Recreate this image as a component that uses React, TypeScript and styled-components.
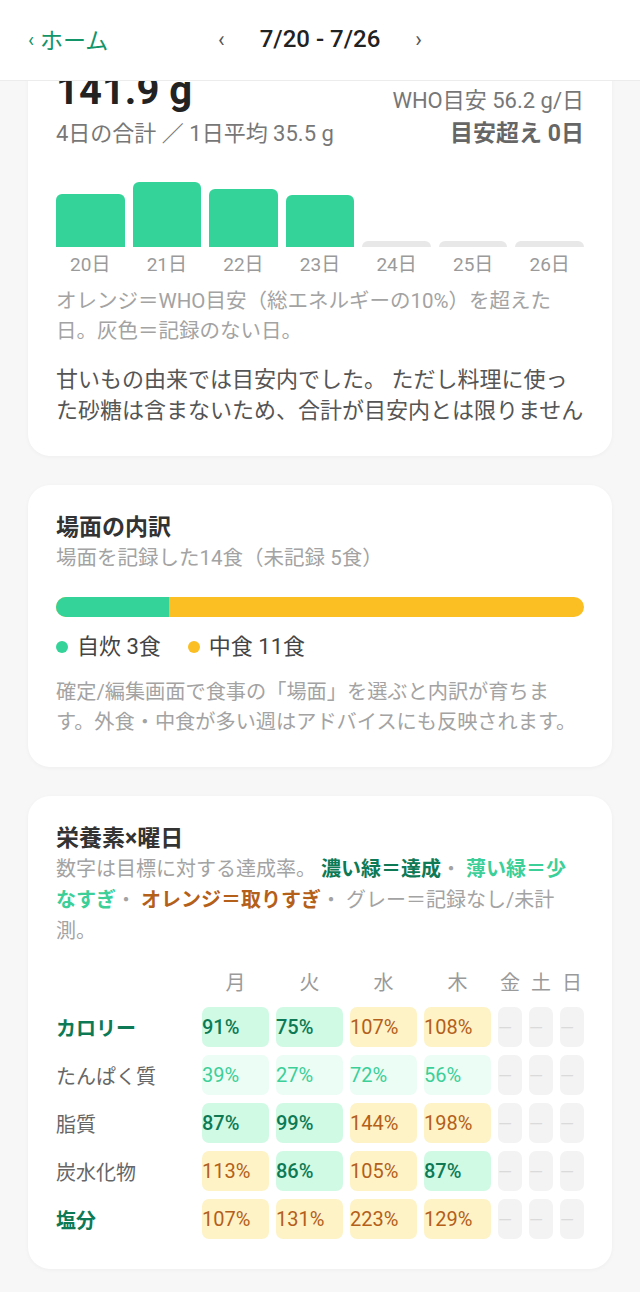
import React from 'react';
import styled, { createGlobalStyle, css } from 'styled-components';

const colors = {
  bg: '#f7f7f7',
  text: '#333333',
  body: '#555555',
  sub: '#a3a3a3',
  muted: '#777777',
  brand: '#139469',
  deep: '#0d7a55',
  mint: '#34d399',
  amber: '#fbbf24',
  orange: '#b45f1a',
};

const GlobalStyle = createGlobalStyle`
  html, body {
    margin: 0;
    padding: 0;
    background: ${colors.bg};
    font-family: Roboto, "Noto Sans CJK JP", sans-serif;
    color: ${colors.text};
  }
  * { box-sizing: border-box; }
`;

const Header = styled.header`
  position: fixed;
  top: 0;
  left: 0;
  right: 0;
  z-index: 10;
  height: 81px;
  background: #fff;
  border-bottom: 1px solid #ececec;
  display: grid;
  grid-template-columns: 1fr auto 1fr;
  align-items: center;
  padding: 0 28px;
`;

const BackLink = styled.a`
  display: flex;
  align-items: center;
  gap: 6px;
  color: ${colors.brand};
  font-size: 23px;
  text-decoration: none;
  margin-top: -3px;

  span:first-child {
    font-size: 20px;
    margin-top: 2px;
  }
`;

const WeekNav = styled.div`
  display: flex;
  align-items: center;
  gap: 35px;
  font-size: 24px;
  font-weight: 500;
  color: #222;
  margin-top: -2px;

  button {
    border: none;
    background: none;
    padding: 0;
    font-size: 22px;
    color: #555;
    font-family: inherit;
  }
`;

const Main = styled.main`
  display: flex;
  flex-direction: column;
  gap: 29px;
  padding: 41px 28px 24px;
`;

const Card = styled.section`
  background: #fff;
  border-radius: 22px;
  box-shadow: 0 1px 4px rgba(0, 0, 0, 0.04);
  padding: 28px 28px 30px;
`;

const SummaryRow = styled.div`
  display: flex;
  justify-content: space-between;
  align-items: flex-end;
`;

const Stack = styled.div<{ $end?: boolean }>`
  display: flex;
  flex-direction: column;
  gap: ${({ $end }) => ($end ? 3 : 6)}px;
  align-items: ${({ $end }) => ($end ? 'flex-end' : 'flex-start')};
`;

const BigNumber = styled.div`
  font-size: 40px;
  font-weight: 700;
  line-height: 44px;
  color: #222;
`;

const Meta = styled.div<{ $strong?: boolean }>`
  font-size: 22px;
  line-height: 30px;
  color: ${colors.muted};
  ${({ $strong }) =>
    $strong &&
    css`
      font-size: 23px;
      font-weight: 700;
      color: #666;
    `}
`;

const Chart = styled.div`
  margin-top: 18px;
  display: grid;
  grid-template-columns: repeat(7, 1fr);
  column-gap: 8px;
`;

const BarSlot = styled.div`
  height: 80px;
  display: flex;
  align-items: flex-end;
`;

const Bar = styled.div<{ $empty?: boolean }>`
  width: 100%;
  border-radius: 6px 6px 0 0;
  background: ${({ $empty }) => ($empty ? '#e8e8e8' : colors.mint)};
`;

const DayLabel = styled.div`
  margin-top: 6px;
  text-align: center;
  font-size: 19px;
  line-height: 24px;
  color: #9a9a9a;
`;

const Note = styled.p<{ $gap?: number; $size?: number }>`
  margin: ${({ $gap }) => $gap ?? 9}px 0 0;
  font-size: ${({ $size }) => $size ?? 20.5}px;
  line-height: 30px;
  color: ${colors.sub};
`;

const Body = styled.p`
  margin: 18px 0 0;
  font-size: 22px;
  line-height: 31px;
  color: ${colors.body};
  display: -webkit-box;
  -webkit-line-clamp: 2;
  -webkit-box-orient: vertical;
  overflow: hidden;
`;

const Title = styled.h2`
  margin: 0;
  font-size: 23px;
  line-height: 30px;
  font-weight: 700;
  color: #333;
`;

const Subtitle = styled.div`
  font-size: 20.5px;
  line-height: 30px;
  color: ${colors.sub};
`;

const SplitBar = styled.div`
  margin-top: 24px;
  height: 20px;
  border-radius: 10px;
  overflow: hidden;
  display: flex;
  background: ${colors.amber};
`;

const Legend = styled.div`
  margin-top: 15px;
  display: flex;
  gap: 27px;
  font-size: 22px;
  line-height: 30px;
  color: #444;
`;

const LegendItem = styled.div<{ $color: string }>`
  display: flex;
  align-items: center;
  gap: 9px;

  &::before {
    content: '';
    width: 12px;
    height: 12px;
    border-radius: 50%;
    background: ${({ $color }) => $color};
  }
`;

const KeyText = styled.p`
  margin: 0;
  font-size: 20px;
  line-height: 31px;
  color: ${colors.sub};
`;

const Key = styled.span<{ $tone: 'deep' | 'light' | 'over' }>`
  font-weight: 700;
  color: ${({ $tone }) => ($tone === 'deep' ? colors.deep : $tone === 'light' ? '#3ccf98' : colors.orange)};
`;

const Grid = styled.div`
  margin-top: 23px;
  display: grid;
  grid-template-columns: 1fr repeat(4, 67px) repeat(3, 24px);
  column-gap: 7px;
  row-gap: 8px;
  align-items: center;
`;

const HeadCell = styled.div`
  text-align: center;
  font-size: 20px;
  line-height: 26px;
  color: #9a9a9a;
  margin-bottom: 3px;
`;

const RowLabel = styled.div<{ $key?: boolean }>`
  font-size: 20px;
  color: ${({ $key }) => ($key ? colors.deep : '#666')};
  font-weight: ${({ $key }) => ($key ? 700 : 400)};
`;

type Tone = 'ok' | 'low' | 'over' | 'none';

const toneStyle: Record<Tone, { bg: string; fg: string; weight: number }> = {
  ok: { bg: '#d1fae5', fg: colors.deep, weight: 500 },
  low: { bg: '#ecfdf5', fg: '#3ccf98', weight: 400 },
  over: { bg: '#fef3c7', fg: colors.orange, weight: 400 },
  none: { bg: '#f3f3f3', fg: '#dadada', weight: 400 },
};

const Cell = styled.div<{ $tone: Tone }>`
  height: 40px;
  border-radius: 7px;
  display: flex;
  align-items: center;
  overflow: hidden;
  font-size: ${({ $tone }) => ($tone === 'none' ? '18px' : '20px')};
  background: ${({ $tone }) => toneStyle[$tone].bg};
  color: ${({ $tone }) => toneStyle[$tone].fg};
  font-weight: ${({ $tone }) => toneStyle[$tone].weight};
`;

const bars = [
  { day: '20日', h: 53 },
  { day: '21日', h: 65 },
  { day: '22日', h: 58 },
  { day: '23日', h: 52 },
  { day: '24日', h: 0 },
  { day: '25日', h: 0 },
  { day: '26日', h: 0 },
];

const weekdays = ['月', '火', '水', '木', '金', '土', '日'];

const nutrients: { name: string; key?: boolean; values: [number, Tone][] }[] = [
  { name: 'カロリー', key: true, values: [[91, 'ok'], [75, 'ok'], [107, 'over'], [108, 'over']] },
  { name: 'たんぱく質', values: [[39, 'low'], [27, 'low'], [72, 'low'], [56, 'low']] },
  { name: '脂質', values: [[87, 'ok'], [99, 'ok'], [144, 'over'], [198, 'over']] },
  { name: '炭水化物', values: [[113, 'over'], [86, 'ok'], [105, 'over'], [87, 'ok']] },
  { name: '塩分', key: true, values: [[107, 'over'], [131, 'over'], [223, 'over'], [129, 'over']] },
];

const HOME_MEALS = 3;
const TOTAL_MEALS = 14;

const App = () => {
  return (
    <>
      <GlobalStyle />
      <Header>
        <BackLink href="#">
          <span>‹</span>
          <span>ホーム</span>
        </BackLink>
        <WeekNav>
          <button>‹</button>
          <span>7/20 - 7/26</span>
          <button>›</button>
        </WeekNav>
        <div />
      </Header>

      <Main>
        <Card>
          <SummaryRow>
            <Stack>
              <BigNumber>141.9 g</BigNumber>
              <Meta>4日の合計 ／ 1日平均 35.5 g</Meta>
            </Stack>
            <Stack $end>
              <Meta>WHO目安 56.2 g/日</Meta>
              <Meta $strong>目安超え 0日</Meta>
            </Stack>
          </SummaryRow>
          <Chart>
            {bars.map((b) => (
              <BarSlot key={b.day}>
                <Bar $empty={!b.h} style={{ height: b.h || 6 }} />
              </BarSlot>
            ))}
            {bars.map((b) => (
              <DayLabel key={b.day}>{b.day}</DayLabel>
            ))}
          </Chart>
          <Note>オレンジ＝WHO目安（総エネルギーの10%）を超えた日。灰色＝記録のない日。</Note>
          <Body>甘いもの由来では目安内でした。 ただし料理に使った砂糖は含まないため、合計が目安内とは限りません</Body>
        </Card>

        <Card>
          <Title>場面の内訳</Title>
          <Subtitle>場面を記録した14食（未記録 5食）</Subtitle>
          <SplitBar>
            <div style={{ width: `${(HOME_MEALS / TOTAL_MEALS) * 100}%`, background: colors.mint }} />
          </SplitBar>
          <Legend>
            <LegendItem $color={colors.mint}>自炊 3食</LegendItem>
            <LegendItem $color={colors.amber}>中食 11食</LegendItem>
          </Legend>
          <Note $gap={15} $size={20.2}>
            確定/編集画面で食事の「場面」を選ぶと内訳が育ちます。外食・中食が多い週はアドバイスにも反映されます。
          </Note>
        </Card>

        <Card>
          <Title>栄養素×曜日</Title>
          <KeyText>
            数字は目標に対する達成率。 <Key $tone="deep">濃い緑＝達成</Key>・ <Key $tone="light">薄い緑＝少なすぎ</Key>・{' '}
            <Key $tone="over">オレンジ＝取りすぎ</Key>・ グレー＝記録なし/未計測。
          </KeyText>
          <Grid>
            <div />
            {weekdays.map((d) => (
              <HeadCell key={d}>{d}</HeadCell>
            ))}
            {nutrients.map((n) => (
              <React.Fragment key={n.name}>
                <RowLabel $key={n.key}>{n.name}</RowLabel>
                {n.values.map(([v, tone], i) => (
                  <Cell key={i} $tone={tone}>
                    {v}%
                  </Cell>
                ))}
                {[0, 1, 2].map((i) => (
                  <Cell key={`e${i}`} $tone="none">
                    —
                  </Cell>
                ))}
              </React.Fragment>
            ))}
          </Grid>
        </Card>
      </Main>
    </>
  );
};

export default App;
